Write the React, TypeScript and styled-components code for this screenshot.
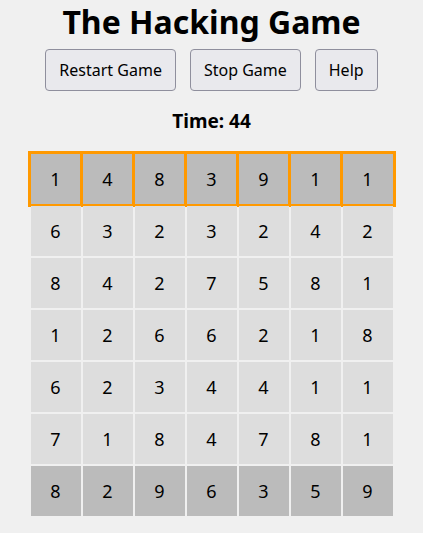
import React from "react";
import styled, { createGlobalStyle } from "styled-components";

const Global = createGlobalStyle`
  html, body { margin: 0; padding: 0; background: #f0f0f0; }
  body { font-family: "Noto Sans", "Open Sans", sans-serif; color: #000; }
`;

const Page = styled.div`
  display: flex;
  flex-direction: column;
  align-items: center;
  padding-top: 0;
`;

const Title = styled.h1`
  margin: 0;
  font-size: 32px;
  font-weight: 700;
  line-height: 44px;
`;

const Toolbar = styled.div`
  display: flex;
  gap: 14px;
  margin-top: 5px;
`;

const Button = styled.button`
  font-family: inherit;
  font-size: 16px;
  line-height: 22px;
  padding: 9px 13px;
  background: #e9e9ed;
  color: #000;
  border: 1px solid #8f8f9d;
  border-radius: 4px;
`;

const Timer = styled.div`
  margin-top: 17px;
  font-size: 19px;
  font-weight: 700;
  line-height: 26px;
`;

const Board = styled.div`
  margin-top: 20px;
  display: grid;
  grid-template-columns: repeat(7, 50px);
  grid-auto-rows: 50px;
  gap: 2px;
`;

const Cell = styled.div<{ $dark: boolean; $selected: boolean }>`
  display: flex;
  align-items: center;
  justify-content: center;
  font-size: 18px;
  background: ${(p) => (p.$dark ? "#bbbbbb" : "#dddddd")};
  ${(p) => (p.$selected ? "outline: 3px solid #ff9900; outline-offset: -0.5px;" : "")}
`;

const grid = [
  [1, 4, 8, 3, 9, 1, 1],
  [6, 3, 2, 3, 2, 4, 2],
  [8, 4, 2, 7, 5, 8, 1],
  [1, 2, 6, 6, 2, 1, 8],
  [6, 2, 3, 4, 4, 1, 1],
  [7, 1, 8, 4, 7, 8, 1],
  [8, 2, 9, 6, 3, 5, 9],
];

export default function App() {
  return (
    <Page>
      <Global />
      <Title>The Hacking Game</Title>
      <Toolbar>
        <Button>Restart Game</Button>
        <Button>Stop Game</Button>
        <Button>Help</Button>
      </Toolbar>
      <Timer>Time: 44</Timer>
      <Board>
        {grid.map((row, r) =>
          row.map((v, c) => (
            <Cell key={`${r}-${c}`} $dark={r === 0 || r === 6} $selected={r === 0}>
              {v}
            </Cell>
          ))
        )}
      </Board>
    </Page>
  );
}
